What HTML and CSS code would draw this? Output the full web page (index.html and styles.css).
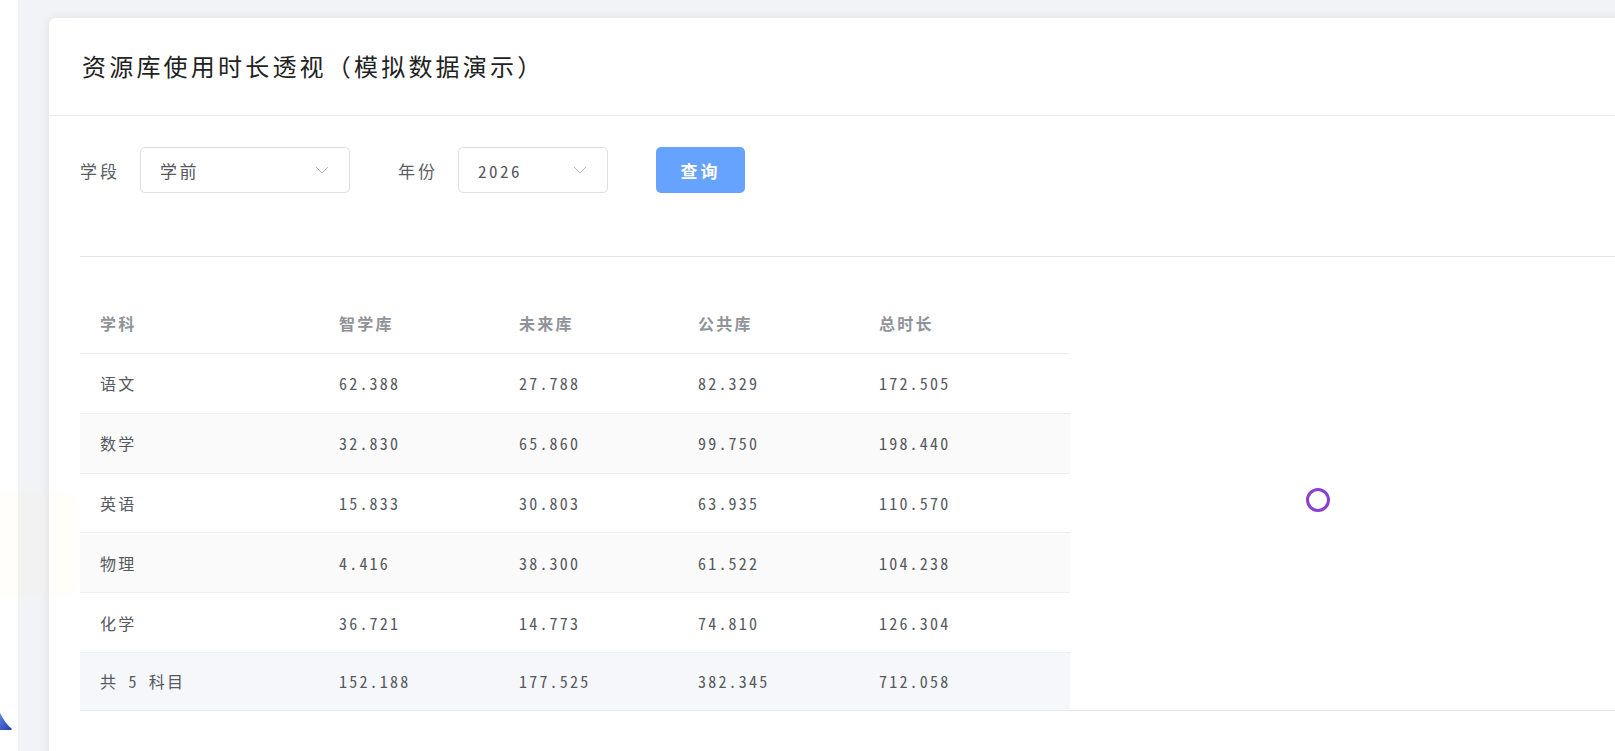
FILE: index.html
```html
<!DOCTYPE html>
<html lang="zh-CN">
<head>
    <meta charset="UTF-8">
    <meta name="viewport" content="width=device-width, initial-scale=1.0">
    <title>资源库使用时长透视</title>
    <link rel="stylesheet" href="styles.css">
</head>
<body>
    <div class="layout">
        <div class="sidebar"></div>
        <div class="main">
            <div class="card">
                <div class="card-header">
                    <h2>资源库使用时长透视（模拟数据演示）</h2>
                </div>
                <div class="card-body">
                    <div class="filters">
                        <span class="filter-label">学段</span>
                        <div class="select select-stage">
                            <span>学前</span>
                            <svg class="arrow" width="14" height="8" viewBox="0 0 14 8"><path d="M1 1 L7 7 L13 1" fill="none" stroke="#b4b7bd" stroke-width="1"/></svg>
                        </div>
                        <span class="filter-label label-year">年份</span>
                        <div class="select select-year">
                            <span>2026</span>
                            <svg class="arrow" width="14" height="8" viewBox="0 0 14 8"><path d="M1 1 L7 7 L13 1" fill="none" stroke="#b4b7bd" stroke-width="1"/></svg>
                        </div>
                        <button class="btn-query">查询</button>
                    </div>

                    <div class="divider"></div>

                    <div class="report">
                        <table class="report-table">
                            <colgroup>
                                <col style="width:239px">
                                <col style="width:180px">
                                <col style="width:179px">
                                <col style="width:181px">
                                <col style="width:211px">
                            </colgroup>
                            <thead>
                                <tr>
                                    <th>学科</th>
                                    <th>智学库</th>
                                    <th>未来库</th>
                                    <th>公共库</th>
                                    <th>总时长</th>
                                </tr>
                            </thead>
                            <tbody>
                                <tr><td>语文</td><td>62.388</td><td>27.788</td><td>82.329</td><td>172.505</td></tr>
                                <tr class="stripe"><td>数学</td><td>32.830</td><td>65.860</td><td>99.750</td><td>198.440</td></tr>
                                <tr><td>英语</td><td>15.833</td><td>30.803</td><td>63.935</td><td>110.570</td></tr>
                                <tr class="stripe"><td>物理</td><td>4.416</td><td>38.300</td><td>61.522</td><td>104.238</td></tr>
                                <tr><td>化学</td><td>36.721</td><td>14.773</td><td>74.810</td><td>126.304</td></tr>
                            </tbody>
                            <tfoot>
                                <tr><td>共 5 科目</td><td>152.188</td><td>177.525</td><td>382.345</td><td>712.058</td></tr>
                            </tfoot>
                        </table>
                        <div class="chart">
                            <div class="spinner"></div>
                        </div>
                    </div>
                </div>
            </div>
        </div>
    </div>

    <!-- restos flutuantes na borda esquerda -->
    <div class="float-ghost"></div>
    <svg class="float-logo" width="14" height="18" viewBox="0 0 14 18">
        <defs>
            <linearGradient id="g1" x1="0" y1="0" x2="1" y2="1">
                <stop offset="0" stop-color="#5a80e6"/>
                <stop offset="1" stop-color="#2341a8"/>
            </linearGradient>
        </defs>
        <path d="M0 0 C3 6 7 12 12 16 L11 17 C7 17 3 17 0 17 Z" fill="url(#g1)"/>
    </svg>
</body>
</html>
```

FILE: styles.css
```css
body {
    margin: 0;
    overflow: hidden;
    background-color: #f2f3f7;
    font-family: "Noto Sans Mono CJK SC", "Noto Sans CJK SC", sans-serif;
    color: #606266;
}
.layout {
    display: flex;
    height: 751px;
}
.sidebar {
    width: 18px;
    flex-shrink: 0;
    background-color: #fff;
}
.main {
    flex: 1;
    padding: 18px 0 0 31px;
    overflow: hidden;
}
.card {
    width: 1600px;
    height: 760px;
    background-color: #fff;
    border-radius: 6px 6px 0 0;
    box-shadow: 0 0 12px rgba(0,0,0,0.08);
}
.card-header {
    height: 94px;
    padding: 0 33px 3px;
    display: flex;
    align-items: center;
    border-bottom: 1px solid #e6e7eb;
}
.card-header h2 {
    margin: 0;
    font-size: 24px;
    font-weight: 500;
    letter-spacing: 3.2px;
    color: #222;
}
.card-body {
    padding: 31px 0 0 31px;
}
.filters {
    display: flex;
    align-items: center;
    height: 46px;
}
.filter-label {
    font-size: 17px;
    letter-spacing: 3px;
    color: #5a5d63;
    margin-right: 20px;
}
.label-year {
    margin-left: 48px;
}
.select {
    height: 46px;
    box-sizing: border-box;
    border: 1px solid #dcdfe6;
    border-radius: 5px;
    padding: 0 20px 0 19px;
    display: flex;
    align-items: center;
    justify-content: space-between;
    font-size: 17px;
    letter-spacing: 2.5px;
    color: #55585e;
}
.select-stage {
    width: 210px;
}
.select-year {
    width: 150px;
}
.btn-query {
    margin-left: 48px;
    width: 89px;
    height: 46px;
    border: none;
    border-radius: 5px;
    background-color: #66a3ff;
    color: #fff;
    font-family: inherit;
    font-size: 17px;
    font-weight: 700;
    letter-spacing: 3px;
}
.divider {
    margin-top: 63px;
    border-top: 1px solid #e4e6eb;
}
.report {
    margin-top: 36px;
    display: flex;
    border-bottom: 1px solid #e6e8ef;
}
.report-table {
    width: 990px;
    border-collapse: collapse;
    table-layout: fixed;
    font-size: 16px;
    letter-spacing: 2.2px;
}
.report-table th {
    height: 60px;
    padding: 0 0 0 20px;
    text-align: left;
    color: #909399;
    font-weight: 700;
    border-bottom: 1px solid #ebeef5;
}
.report-table td {
    height: 58.8px;
    padding: 0 0 0 20px;
    color: #55585e;
    border-bottom: 1px solid #ebeef5;
}
.report-table .stripe td {
    background-color: #fafafa;
}
.report-table tfoot td {
    height: 57px;
    border-bottom: none;
    background-color: #f5f7fa;
}
.chart {
    width: 496px;
    padding-bottom: 3px;
    display: flex;
    align-items: center;
    justify-content: center;
}
.spinner {
    width: 18px;
    height: 18px;
    border: 3px solid #8b3fd1;
    border-radius: 50%;
}
.float-ghost {
    position: absolute;
    left: -10px;
    top: 492px;
    width: 88px;
    height: 105px;
    border-radius: 14px;
    background-color: rgba(255, 236, 205, 0.07);
}
.float-logo {
    position: absolute;
    left: 0;
    top: 713px;
}
```
